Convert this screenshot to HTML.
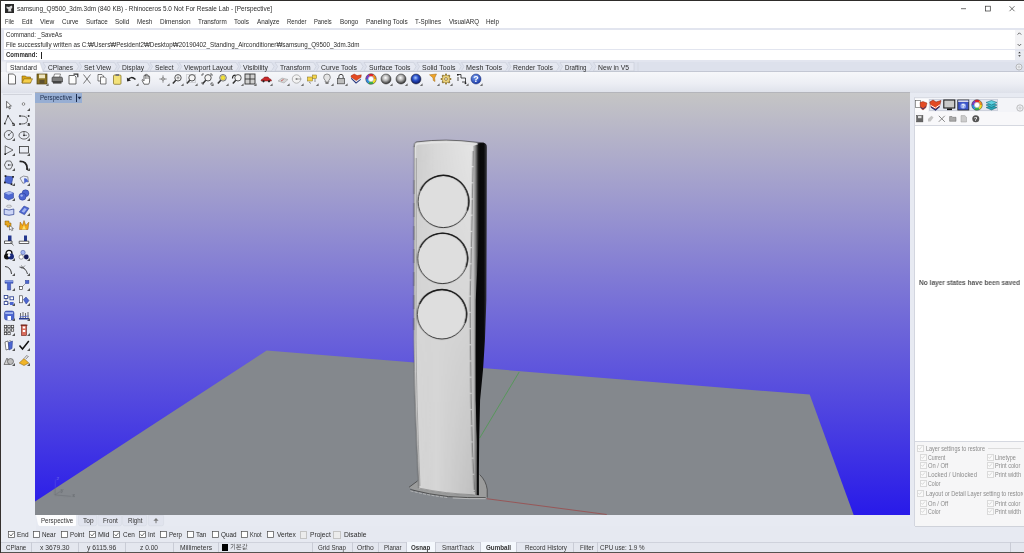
<!DOCTYPE html>
<html lang="en"><head><meta charset="utf-8"><title>Rhinoceros</title>
<style>

html,body{margin:0;padding:0}
body{width:1024px;height:553px;overflow:hidden;position:relative;background:#e6e9f1;font-family:"Liberation Sans", "NanumGothic", "Noto Sans CJK KR", sans-serif;font-size:7px;color:#222;line-height:1}
.a{position:absolute;white-space:nowrap}
.t{position:absolute;white-space:nowrap;line-height:10px;height:10px;transform-origin:0 50%}
.b{font-weight:bold}
.cb{position:absolute;width:5.5px;height:5.5px;border:0.6px solid #444;background:#fff}
.cbd{position:absolute;width:5.5px;height:5.5px;border:0.6px solid #c4c4c4;background:#ececec}
.cbg{position:absolute;width:5px;height:5px;border:0.6px solid #dadada;background:#fafafa}
.sep{position:absolute;width:1px;background:#c9ccd6;top:542px;height:10px}
svg{position:absolute;overflow:visible}

</style></head><body><div id="root" style="position:absolute;left:0;top:0;width:1024px;height:553px;will-change:transform">

<div class="a" style="left:0;top:0;width:1024px;height:27.5px;background:#fff"></div>
<div class="a" style="left:0;top:0;width:1024px;height:1px;background:#2e2c2a"></div>
<svg style="left:5px;top:4px" width="9" height="9" viewBox="0 0 9 9"><rect width="9" height="9" fill="#2a2a2a"/><path d="M1.5 2.5 L4 3 L6.5 1.5 L7.5 3 L6 5.5 L6.5 7.5 L3 7.5 L3.5 5.5 L1.5 4 Z" fill="#d8d8d8"/></svg>
<div class="t" id="t1" style="left:17px;top:4px;font-size:6.9px;color:#2c2c2c;transform:scaleX(0.9299);">samsung_Q9500_3dm.3dm (840 KB) - Rhinoceros 5.0 Not For Resale Lab - [Perspective]</div>
<svg style="left:955px;top:3px" width="66" height="12" viewBox="0 0 66 12"><g stroke="#333" stroke-width="0.7" fill="none"><path d="M6 5.7 H11"/><rect x="30.5" y="3.2" width="4.8" height="4.8"/><path d="M54.5 3.2 L59.5 8.2 M59.5 3.2 L54.5 8.2"/></g></svg>
<div class="t" id="t2" style="left:5px;top:17.2px;font-size:7.3px;color:#2c2c2c;transform:scaleX(0.7649);">File</div>
<div class="t" id="t3" style="left:22px;top:17.2px;font-size:7.3px;color:#2c2c2c;transform:scaleX(0.8348);">Edit</div>
<div class="t" id="t4" style="left:40px;top:17.2px;font-size:7.3px;color:#2c2c2c;transform:scaleX(0.9084);">View</div>
<div class="t" id="t5" style="left:61.5px;top:17.2px;font-size:7.3px;color:#2c2c2c;transform:scaleX(0.8475);">Curve</div>
<div class="t" id="t6" style="left:85.75px;top:17.2px;font-size:7.3px;color:#2c2c2c;transform:scaleX(0.8646);">Surface</div>
<div class="t" id="t7" style="left:114.5px;top:17.2px;font-size:7.3px;color:#2c2c2c;transform:scaleX(0.8778);">Solid</div>
<div class="t" id="t8" style="left:136.5px;top:17.2px;font-size:7.3px;color:#2c2c2c;transform:scaleX(0.8546);">Mesh</div>
<div class="t" id="t9" style="left:159.5px;top:17.2px;font-size:7.3px;color:#2c2c2c;transform:scaleX(0.8845);">Dimension</div>
<div class="t" id="t10" style="left:197.5px;top:17.2px;font-size:7.3px;color:#2c2c2c;transform:scaleX(0.8716);">Transform</div>
<div class="t" id="t11" style="left:234px;top:17.2px;font-size:7.3px;color:#2c2c2c;transform:scaleX(0.8799);">Tools</div>
<div class="t" id="t12" style="left:256.75px;top:17.2px;font-size:7.3px;color:#2c2c2c;transform:scaleX(0.8664);">Analyze</div>
<div class="t" id="t13" style="left:286.5px;top:17.2px;font-size:7.3px;color:#2c2c2c;transform:scaleX(0.8146);">Render</div>
<div class="t" id="t14" style="left:314px;top:17.2px;font-size:7.3px;color:#2c2c2c;transform:scaleX(0.7955);">Panels</div>
<div class="t" id="t15" style="left:339.75px;top:17.2px;font-size:7.3px;color:#2c2c2c;transform:scaleX(0.8645);">Bongo</div>
<div class="t" id="t16" style="left:365.5px;top:17.2px;font-size:7.3px;color:#2c2c2c;transform:scaleX(0.8818);">Paneling Tools</div>
<div class="t" id="t17" style="left:415px;top:17.2px;font-size:7.3px;color:#2c2c2c;transform:scaleX(0.8546);">T-Splines</div>
<div class="t" id="t18" style="left:448.5px;top:17.2px;font-size:7.3px;color:#2c2c2c;transform:scaleX(0.8436);">VisualARQ</div>
<div class="t" id="t19" style="left:486px;top:17.2px;font-size:7.3px;color:#2c2c2c;transform:scaleX(0.8658);">Help</div>
<div class="a" style="left:1px;top:27.5px;width:1023px;height:34px;background:#e2e5ef"></div>
<div class="a" style="left:4px;top:29.5px;width:1011px;height:19.8px;background:#fff"></div>
<div class="a" style="left:4px;top:50.2px;width:1011px;height:9.8px;background:#fff"></div>
<div class="a" style="left:1015px;top:29.5px;width:9px;height:19.5px;background:#f3f3f5"></div>
<div class="a" style="left:1015px;top:50.5px;width:9px;height:9.5px;background:#e9ebf1"></div>
<svg style="left:1015px;top:29px" width="9" height="31" viewBox="0 0 9 31"><g stroke="#444" stroke-width="0.8" fill="none"><path d="M2.6 5.6 L4.4 3.8 L6.2 5.6"/><path d="M2.6 15 L4.4 16.8 L6.2 15"/></g><path d="M3.2 24.3 L4.5 22.8 L5.8 24.3 Z M3.2 26.3 L4.5 27.8 L5.8 26.3 Z" fill="#333"/></svg>
<div class="t" id="t20" style="left:6px;top:29.5px;font-size:6.9px;color:#2c2c2c;transform:scaleX(0.8860);">Command: _SaveAs</div>
<div class="t" id="t21" style="left:6px;top:39.5px;font-size:6.9px;color:#2c2c2c;transform:scaleX(0.9076);">File successfully written as C:₩Users₩Pesident2₩Desktop₩20190402_Standing_Airconditioner₩samsung_Q9500_3dm.3dm</div>
<div class="t b" id="t22" style="left:6px;top:49.5px;font-size:6.9px;color:#2c2c2c;transform:scaleX(0.8754);">Command:</div>
<div class="a" style="left:40.5px;top:51.5px;width:0.7px;height:7px;background:#222"></div>
<div class="a" style="left:1px;top:61.5px;width:1023px;height:10px;background:#dde1ec"></div>
<div class="a" style="left:1px;top:71.5px;width:1023px;height:21.5px;background:linear-gradient(#f6f7fa,#eceef4 55%,#dee1ea)"></div>
<div class="a" style="left:35.3px;top:92.4px;width:874.4px;height:0.8px;background:#b4b5bb"></div>
<div class="a" style="left:1px;top:71px;width:1023px;height:0.7px;background:#c3c7d3"></div>
<svg style="left:0;top:61px" width="640" height="11" viewBox="0 0 640 11">
<rect x="1.3" y="0.5" width="5" height="10.5" fill="#eef0f5"/>
<path d="M43.0 1.4 H76.0 L78.6 5.6 L76.0 9.9 H43.0 L45.6 5.6 Z" fill="#e5e8f1" stroke="#c2c6d2" stroke-width="0.5"/>
<path d="M79.25 1.4 H114.25 L116.85 5.6 L114.25 9.9 H79.25 L81.85 5.6 Z" fill="#e5e8f1" stroke="#c2c6d2" stroke-width="0.5"/>
<path d="M117.25 1.4 H147.25 L149.85 5.6 L147.25 9.9 H117.25 L119.85 5.6 Z" fill="#e5e8f1" stroke="#c2c6d2" stroke-width="0.5"/>
<path d="M150.0 1.4 H176.5 L179.1 5.6 L176.5 9.9 H150.0 L152.6 5.6 Z" fill="#e5e8f1" stroke="#c2c6d2" stroke-width="0.5"/>
<path d="M179.25 1.4 H236.0 L238.6 5.6 L236.0 9.9 H179.25 L181.85 5.6 Z" fill="#e5e8f1" stroke="#c2c6d2" stroke-width="0.5"/>
<path d="M238.5 1.4 H271.5 L274.1 5.6 L271.5 9.9 H238.5 L241.1 5.6 Z" fill="#e5e8f1" stroke="#c2c6d2" stroke-width="0.5"/>
<path d="M275.0 1.4 H313.5 L316.1 5.6 L313.5 9.9 H275.0 L277.6 5.6 Z" fill="#e5e8f1" stroke="#c2c6d2" stroke-width="0.5"/>
<path d="M316.5 1.4 H360.5 L363.1 5.6 L360.5 9.9 H316.5 L319.1 5.6 Z" fill="#e5e8f1" stroke="#c2c6d2" stroke-width="0.5"/>
<path d="M364.0 1.4 H413.5 L416.1 5.6 L413.5 9.9 H364.0 L366.6 5.6 Z" fill="#e5e8f1" stroke="#c2c6d2" stroke-width="0.5"/>
<path d="M417.0 1.4 H458.5 L461.1 5.6 L458.5 9.9 H417.0 L419.6 5.6 Z" fill="#e5e8f1" stroke="#c2c6d2" stroke-width="0.5"/>
<path d="M461.5 1.4 H505.5 L508.1 5.6 L505.5 9.9 H461.5 L464.1 5.6 Z" fill="#e5e8f1" stroke="#c2c6d2" stroke-width="0.5"/>
<path d="M508.5 1.4 H556.5 L559.1 5.6 L556.5 9.9 H508.5 L511.1 5.6 Z" fill="#e5e8f1" stroke="#c2c6d2" stroke-width="0.5"/>
<path d="M560.0 1.4 H589.5 L592.1 5.6 L589.5 9.9 H560.0 L562.6 5.6 Z" fill="#e5e8f1" stroke="#c2c6d2" stroke-width="0.5"/>
<path d="M593.5 1.4 H634.0 V9.9 H593.5 L596.1 5.6 Z" fill="#e5e8f1" stroke="#c2c6d2" stroke-width="0.5"/>
<path d="M6.3 11 V1.2 H40 L43.2 11 Z" fill="#fcfcfd" stroke="#c9ccd6" stroke-width="0.5"/>
<path d="M638 1.4 V9.9" stroke="#cdd0da" stroke-width="0.5"/></svg>
<div class="t" id="t23" style="left:10px;top:63.0px;font-size:6.9px;color:#2c2c2c;transform:scaleX(0.9654);">Standard</div>
<div class="t" id="t24" style="left:47.5px;top:63.0px;font-size:6.9px;color:#2c2c2c;transform:scaleX(0.9598);">CPlanes</div>
<div class="t" id="t25" style="left:83.75px;top:63.0px;font-size:6.9px;color:#2c2c2c;transform:scaleX(0.9971);">Set View</div>
<div class="t" id="t26" style="left:121.75px;top:63.0px;font-size:6.9px;color:#2c2c2c;transform:scaleX(0.9737);">Display</div>
<div class="t" id="t27" style="left:154.5px;top:63.0px;font-size:6.9px;color:#2c2c2c;transform:scaleX(0.9657);">Select</div>
<div class="t" id="t28" style="left:183.75px;top:63.0px;font-size:6.9px;color:#2c2c2c;transform:scaleX(0.9889);">Viewport Layout</div>
<div class="t" id="t29" style="left:243px;top:63.0px;font-size:6.9px;color:#2c2c2c;transform:scaleX(1.0095);">Visibility</div>
<div class="t" id="t30" style="left:279.5px;top:63.0px;font-size:6.9px;color:#2c2c2c;transform:scaleX(0.9794);">Transform</div>
<div class="t" id="t31" style="left:321px;top:63.0px;font-size:6.9px;color:#2c2c2c;transform:scaleX(0.9927);">Curve Tools</div>
<div class="t" id="t32" style="left:368.5px;top:63.0px;font-size:6.9px;color:#2c2c2c;transform:scaleX(0.9970);">Surface Tools</div>
<div class="t" id="t33" style="left:421.5px;top:63.0px;font-size:6.9px;color:#2c2c2c;transform:scaleX(1.0089);">Solid Tools</div>
<div class="t" id="t34" style="left:466px;top:63.0px;font-size:6.9px;color:#2c2c2c;transform:scaleX(1.0364);">Mesh Tools</div>
<div class="t" id="t35" style="left:513px;top:63.0px;font-size:6.9px;color:#2c2c2c;transform:scaleX(0.9880);">Render Tools</div>
<div class="t" id="t36" style="left:564.5px;top:63.0px;font-size:6.9px;color:#2c2c2c;transform:scaleX(0.8906);">Drafting</div>
<div class="t" id="t37" style="left:598px;top:63.0px;font-size:6.9px;color:#2c2c2c;transform:scaleX(0.9871);">New in V5</div>
<svg style="left:1015px;top:63px" width="8" height="8" viewBox="0 0 8 8"><circle cx="4" cy="4" r="3" fill="#eceef3" stroke="#999" stroke-width="0.6"/><circle cx="4" cy="4" r="1" fill="none" stroke="#aaa" stroke-width="0.5"/></svg>
<svg style="left:6.2px;top:73.3px" width="12" height="12" viewBox="0 0 12 12"><path d="M2.5 1 H7.5 L9.5 3 V11 H2.5 Z" fill="#fcfcfc" stroke="#444" stroke-width="0.8"/></svg>
<svg style="left:21.3px;top:73.3px" width="12" height="12" viewBox="0 0 12 12"><path d="M1 3 H4.5 L5.5 4 H9.5 V10 H1 Z" fill="#d9a514" stroke="#7a5a0a" stroke-width="0.6"/><path d="M1 10 L3 5.8 H11.5 L9.5 10 Z" fill="#f6cf4a" stroke="#7a5a0a" stroke-width="0.6"/></svg>
<svg style="left:36.3px;top:73.3px" width="12" height="12" viewBox="0 0 12 12"><rect x="1" y="1" width="10" height="10" fill="#8b7322" stroke="#4d3f10" stroke-width="0.7"/><rect x="3" y="1.5" width="6" height="3.8" fill="#efe6c0"/><rect x="3.5" y="7" width="5" height="3.6" fill="#5d5030"/><path d="M12.6 10.2 V13 H9.8 Z" fill="#6e6e6e"/></svg>
<svg style="left:50.8px;top:73.3px" width="12" height="12" viewBox="0 0 12 12"><path d="M3.5 1 H9.5 L8.5 4.5 H2.5 Z" fill="#fff" stroke="#444" stroke-width="0.6"/><path d="M1 5 Q1 4 2 4 H10 Q11.5 4 11.5 5.5 V9 H1 Z" fill="#7d7d7d" stroke="#333" stroke-width="0.6"/><rect x="2" y="8" width="8.5" height="2.6" fill="#444"/></svg>
<svg style="left:67.1px;top:73.3px" width="12" height="12" viewBox="0 0 12 12"><path d="M2 2.5 H7.5 L9 4 V11 H2 Z" fill="#fcfcfc" stroke="#444" stroke-width="0.8"/><path d="M6.5 1.2 H10.8 V4.2" fill="none" stroke="#333" stroke-width="1.2"/></svg>
<svg style="left:80.8px;top:73.3px" width="12" height="12" viewBox="0 0 12 12"><path d="M2.5 1.5 L9.5 10.5 M9.5 1.5 L2.5 10.5" stroke="#666" stroke-width="0.9" fill="none"/></svg>
<svg style="left:96.3px;top:73.3px" width="12" height="12" viewBox="0 0 12 12"><path d="M2 1.5 H6 L7.5 3 V8 H2 Z" fill="#fcfcfc" stroke="#444" stroke-width="0.7"/><path d="M4.5 4 H8.5 L10 5.5 V11 H4.5 Z" fill="#fcfcfc" stroke="#444" stroke-width="0.7"/></svg>
<svg style="left:110.8px;top:73.3px" width="12" height="12" viewBox="0 0 12 12"><rect x="2.5" y="2" width="7.5" height="9.3" rx="1" fill="#f3e27a" stroke="#7d6a1a" stroke-width="0.7"/><rect x="4.5" y="1" width="3.5" height="2" fill="#777"/></svg>
<svg style="left:125.8px;top:73.3px" width="12" height="12" viewBox="0 0 12 12"><path d="M2 7 Q5 2.5 9.5 6.5" fill="none" stroke="#222" stroke-width="1.5"/><path d="M0.8 4.5 L1.2 8.6 L5 7.4 Z" fill="#222"/><path d="M12.6 10.2 V13 H9.8 Z" fill="#6e6e6e"/></svg>
<svg style="left:140.4px;top:73.3px" width="12" height="12" viewBox="0 0 12 12"><path d="M4 11.2 L2.2 7.6 Q1.8 6.6 2.8 6.6 L4 7.8 V3 Q4 2.2 4.7 2.2 Q5.4 2.2 5.4 3 V2 Q5.4 1.2 6.1 1.2 Q6.8 1.2 6.8 2 V2.6 Q6.8 1.9 7.5 1.9 Q8.2 1.9 8.2 2.7 V3.6 Q8.2 3 8.9 3 Q9.6 3 9.6 3.8 V8 Q9.6 9.8 8.6 11.2 Z" fill="#fff" stroke="#2e2e2e" stroke-width="0.7"/><path d="M5.4 3 V6 M6.8 2.6 V6 M8.2 3.6 V6" stroke="#2e2e2e" stroke-width="0.5" fill="none"/></svg>
<svg style="left:156.8px;top:73.3px" width="12" height="12" viewBox="0 0 12 12"><path d="M6 2.3 V9.7 M2.3 6 H9.7" stroke="#777" stroke-width="0.8"/><circle cx="6" cy="6" r="1.2" fill="#fff" stroke="#333" stroke-width="0.6"/><path d="M12.6 10.2 V13 H9.8 Z" fill="#6e6e6e"/></svg>
<svg style="left:170.8px;top:73.3px" width="12" height="12" viewBox="0 0 12 12"><circle cx="7" cy="4.8" r="3.2" fill="#f4f4f4" stroke="#444" stroke-width="0.9"/><path d="M4.8 7.2 L1.8 10.6" stroke="#333" stroke-width="1.5"/><path d="M5.5 4.8 H8.5 M7 3.3 V6.3" stroke="#555" stroke-width="0.6"/><path d="M12.6 10.2 V13 H9.8 Z" fill="#6e6e6e"/></svg>
<svg style="left:185.4px;top:73.3px" width="12" height="12" viewBox="0 0 12 12"><circle cx="7" cy="4.8" r="3.2" fill="#f4f4f4" stroke="#444" stroke-width="0.9"/><path d="M4.8 7.2 L1.8 10.6" stroke="#333" stroke-width="1.5"/><rect x="1.5" y="1.5" width="9" height="8" fill="none" stroke="#777" stroke-width="0.5" stroke-dasharray="1 1"/><path d="M12.6 10.2 V13 H9.8 Z" fill="#6e6e6e"/></svg>
<svg style="left:200.70000000000002px;top:73.3px" width="12" height="12" viewBox="0 0 12 12"><circle cx="7" cy="4.8" r="3.2" fill="#f4f4f4" stroke="#444" stroke-width="0.9"/><path d="M4.8 7.2 L1.8 10.6" stroke="#333" stroke-width="1.5"/><path d="M1 3 V1 H3 M9 1 H11 V3 M11 9 V11 H9 M3 11 H1 V9" fill="none" stroke="#333" stroke-width="0.7"/><path d="M12.6 10.2 V13 H9.8 Z" fill="#6e6e6e"/></svg>
<svg style="left:215.8px;top:73.3px" width="12" height="12" viewBox="0 0 12 12"><circle cx="7" cy="4.8" r="3.3" fill="#e8e8e8" stroke="#666" stroke-width="0.9"/><circle cx="7" cy="4.8" r="2.2" fill="#f2e23a" stroke="#a89a18" stroke-width="0.4"/><path d="M4.8 7.2 L1.8 10.6" stroke="#333" stroke-width="1.5"/><path d="M12.6 10.2 V13 H9.8 Z" fill="#6e6e6e"/></svg>
<svg style="left:230.5px;top:73.3px" width="12" height="12" viewBox="0 0 12 12"><circle cx="7" cy="4.8" r="3.2" fill="#f4f4f4" stroke="#444" stroke-width="0.9"/><path d="M4.8 7.2 L1.8 10.6" stroke="#333" stroke-width="1.5"/><path d="M1.5 5.5 Q1.5 2 4.5 2.2" fill="none" stroke="#222" stroke-width="1.2"/><path d="M12.6 10.2 V13 H9.8 Z" fill="#6e6e6e"/></svg>
<svg style="left:244.4px;top:73.3px" width="12" height="12" viewBox="0 0 12 12"><rect x="1" y="1" width="10" height="10" fill="#cfcfcf" stroke="#333" stroke-width="0.9"/><path d="M6 1 V11 M1 6 H11" stroke="#333" stroke-width="0.9"/><path d="M12.6 10.2 V13 H9.8 Z" fill="#6e6e6e"/></svg>
<svg style="left:260.2px;top:73.3px" width="12" height="12" viewBox="0 0 12 12"><path d="M1 8 Q1 6 3 5.8 L4.5 4 H8 L9.5 5.8 Q11.5 6 11.5 8 Z" fill="#c8282a" stroke="#6a1010" stroke-width="0.5"/><circle cx="3.5" cy="8.3" r="1.1" fill="#222"/><circle cx="9" cy="8.3" r="1.1" fill="#222"/><path d="M12.6 10.2 V13 H9.8 Z" fill="#6e6e6e"/></svg>
<svg style="left:276.7px;top:73.3px" width="12" height="12" viewBox="0 0 12 12"><path d="M1 8 L5 5 L11 6.5 L7 10 Z" fill="#d5d5d5" stroke="#999" stroke-width="0.5"/><path d="M4 8 L6.5 6.5" stroke="#b33" stroke-width="0.7"/><path d="M12.6 10.2 V13 H9.8 Z" fill="#6e6e6e"/></svg>
<svg style="left:290.7px;top:73.3px" width="12" height="12" viewBox="0 0 12 12"><circle cx="5.5" cy="6" r="4.2" fill="#f2f2f2" stroke="#999" stroke-width="0.7"/><circle cx="5.5" cy="6" r="1" fill="#888"/><path d="M5.5 6 H10.5" stroke="#888" stroke-width="0.7"/><path d="M12.6 10.2 V13 H9.8 Z" fill="#6e6e6e"/></svg>
<svg style="left:305.90000000000003px;top:73.3px" width="12" height="12" viewBox="0 0 12 12"><rect x="1.5" y="4" width="5" height="4" fill="#f5d54a" stroke="#7d6a1a" stroke-width="0.5"/><rect x="6.5" y="2" width="4" height="3.5" fill="#f5d54a" stroke="#7d6a1a" stroke-width="0.5"/><path d="M3 9 L5 10.5 M9 6 V9" stroke="#555" stroke-width="0.6"/><path d="M12.6 10.2 V13 H9.8 Z" fill="#6e6e6e"/></svg>
<svg style="left:320.5px;top:73.3px" width="12" height="12" viewBox="0 0 12 12"><path d="M6 1 Q9.3 1 9.3 4.2 Q9.3 6 7.8 7.3 V9 H4.2 V7.3 Q2.7 6 2.7 4.2 Q2.7 1 6 1 Z" fill="#e4e4e4" stroke="#666" stroke-width="0.7"/><rect x="4.5" y="9" width="3" height="2" fill="#777"/><path d="M12.6 10.2 V13 H9.8 Z" fill="#6e6e6e"/></svg>
<svg style="left:335.3px;top:73.3px" width="12" height="12" viewBox="0 0 12 12"><path d="M3.8 5.5 V3.6 Q3.8 1.3 6 1.3 Q8.2 1.3 8.2 3.6 V5.5" fill="none" stroke="#444" stroke-width="1"/><rect x="2.5" y="5.5" width="7" height="5.3" fill="#bdbdbd" stroke="#444" stroke-width="0.7"/><path d="M12.6 10.2 V13 H9.8 Z" fill="#6e6e6e"/></svg>
<svg style="left:350.3px;top:73.3px" width="12" height="12" viewBox="0 0 12 12"><path d="M1.2 6 L6 10.8 L10.6 7 L11.2 4 L6.5 7.5 L1 3.2 Z" fill="#2a3a80"/><path d="M1 4.6 L6.2 9.3 L11 5.6 L11.2 3.4 L6.5 6 L1 2.6 Z" fill="#f4f4f4"/><path d="M1 2.8 L4.2 1 L7.2 2.6 L11.3 1.8 L11 4.2 L6.3 7.6 L1.2 4.2 Z" fill="#e44a22" stroke="#8c220e" stroke-width="0.4"/></svg>
<svg style="left:364.90000000000003px;top:73.3px" width="12" height="12" viewBox="0 0 12 12"><path d="M4.00 2.54 A4 4 0 0 1 8.12 2.61" fill="none" stroke="#e8242c" stroke-width="2.6"/><path d="M8.00 2.54 A4 4 0 0 1 10.00 6.14" fill="none" stroke="#f08a1c" stroke-width="2.6"/><path d="M10.00 6.00 A4 4 0 0 1 7.88 9.53" fill="none" stroke="#f2de22" stroke-width="2.6"/><path d="M8.00 9.46 A4 4 0 0 1 3.88 9.39" fill="none" stroke="#3cb64a" stroke-width="2.6"/><path d="M4.00 9.46 A4 4 0 0 1 2.00 5.86" fill="none" stroke="#2a8fe0" stroke-width="2.6"/><path d="M2.00 6.00 A4 4 0 0 1 4.12 2.47" fill="none" stroke="#7a3cc8" stroke-width="2.6"/><circle cx="6" cy="6" r="5.3" fill="none" stroke="#333" stroke-width="0.5"/><circle cx="6" cy="6" r="2.7" fill="#fff" stroke="#555" stroke-width="0.3"/></svg>
<svg style="left:380.1px;top:73.3px" width="12" height="12" viewBox="0 0 12 12"><defs><radialGradient id="g99" cx="0.45" cy="0.38" r="0.62"><stop offset="0" stop-color="#ffffff"/><stop offset="0.45" stop-color="#b8b8b8"/><stop offset="1" stop-color="#2a2a2a"/></radialGradient></defs><circle cx="6" cy="6" r="5" fill="url(#g99)" stroke="#2a2a2a" stroke-width="0.5"/><path d="M12.6 10.2 V13 H9.8 Z" fill="#6e6e6e"/></svg>
<svg style="left:394.90000000000003px;top:73.3px" width="12" height="12" viewBox="0 0 12 12"><defs><radialGradient id="g100" cx="0.45" cy="0.38" r="0.62"><stop offset="0" stop-color="#ffffff"/><stop offset="0.45" stop-color="#b0b0b0"/><stop offset="1" stop-color="#262626"/></radialGradient></defs><circle cx="6" cy="6" r="5" fill="url(#g100)" stroke="#2a2a2a" stroke-width="0.5"/><path d="M12.6 10.2 V13 H9.8 Z" fill="#6e6e6e"/></svg>
<svg style="left:410.0px;top:73.3px" width="12" height="12" viewBox="0 0 12 12"><defs><radialGradient id="g101" cx="0.45" cy="0.38" r="0.62"><stop offset="0" stop-color="#a8c8ff"/><stop offset="0.45" stop-color="#2a50c8"/><stop offset="1" stop-color="#0a1660"/></radialGradient></defs><circle cx="6" cy="6" r="5" fill="url(#g101)" stroke="#2a2a2a" stroke-width="0.5"/><path d="M12.6 10.2 V13 H9.8 Z" fill="#6e6e6e"/></svg>
<svg style="left:427.40000000000003px;top:73.3px" width="12" height="12" viewBox="0 0 12 12"><path d="M2.5 1.8 L9.5 1 L7.6 5 L8 8.5 L6.3 7.5 L6 4.8 Z" fill="#f0a428" stroke="#a06a14" stroke-width="0.5"/><path d="M12.6 10.2 V13 H9.8 Z" fill="#6e6e6e"/></svg>
<svg style="left:439.6px;top:73.3px" width="12" height="12" viewBox="0 0 12 12"><circle cx="6" cy="6" r="3.6" fill="#e8cc6a" stroke="#6a5212" stroke-width="0.7"/><g stroke="#6a5212" stroke-width="2"><path d="M6 0.8 V2.4 M6 9.6 V11.2 M0.8 6 H2.4 M9.6 6 H11.2 M2.3 2.3 L3.5 3.5 M8.5 8.5 L9.7 9.7 M2.3 9.7 L3.5 8.5 M8.5 3.5 L9.7 2.3"/></g><circle cx="6" cy="6" r="3.3" fill="#ecd27a"/><g stroke="#ecd27a" stroke-width="1.1"><path d="M6 1.3 V2.8 M6 9.2 V10.7 M1.3 6 H2.8 M9.2 6 H10.7 M2.7 2.7 L3.7 3.7 M8.3 8.3 L9.3 9.3 M2.7 9.3 L3.7 8.3 M8.3 3.7 L9.3 2.7"/></g><circle cx="6" cy="6" r="1.4" fill="#f6f2e2" stroke="#6a5212" stroke-width="0.6"/><path d="M12.6 10.2 V13 H9.8 Z" fill="#6e6e6e"/></svg>
<svg style="left:455.8px;top:73.3px" width="12" height="12" viewBox="0 0 12 12"><path d="M1.5 1.5 H5 V5 M5 5 H9.5 V10.5 M2 4 V8 M6 9 H10" fill="none" stroke="#222" stroke-width="0.8"/><rect x="1" y="1" width="1.6" height="1.6" fill="#222"/><rect x="8.7" y="9.5" width="1.6" height="1.6" fill="#222"/><path d="M12.6 10.2 V13 H9.8 Z" fill="#6e6e6e"/></svg>
<svg style="left:469.8px;top:73.3px" width="12" height="12" viewBox="0 0 12 12"><defs><radialGradient id="hg" cx="0.4" cy="0.3" r="0.7"><stop offset="0" stop-color="#7aa0f0"/><stop offset="1" stop-color="#1a3aa8"/></radialGradient></defs><circle cx="6" cy="6" r="5" fill="url(#hg)" stroke="#14286e" stroke-width="0.5"/><text x="6" y="9.2" font-size="9" font-weight="bold" fill="#fff" text-anchor="middle" font-family="Liberation Sans, sans-serif">?</text><path d="M12.6 10.2 V13 H9.8 Z" fill="#6e6e6e"/></svg>
<div class="a" style="left:0;top:93px;width:36px;height:449px;background:#e9ecf3"></div>
<div class="a" style="left:3px;top:94.3px;width:29px;height:0.8px;background:#d0d3db"></div>
<svg style="left:3px;top:98.5px" width="12" height="12" viewBox="0 0 12 12"><path d="M3.6 2.3 V9 L5.2 7.5 L6.4 10 L7.4 9.5 L6.3 7.1 H8.4 Z" fill="#fff" stroke="#333" stroke-width="0.7"/></svg>
<svg style="left:18px;top:98.5px" width="12" height="12" viewBox="0 0 12 12"><circle cx="5.5" cy="5" r="1.3" fill="#fff" stroke="#444" stroke-width="0.6"/><path d="M12 9 V12 H9 Z" fill="#555"/></svg>
<svg style="left:3px;top:113.5px" width="12" height="12" viewBox="0 0 12 12"><path d="M1.8 9.5 L5 2 L10 9.5" fill="none" stroke="#333" stroke-width="0.7"/><rect x="1" y="8.8" width="1.6" height="1.6" fill="#222"/><rect x="4.2" y="1.2" width="1.6" height="1.6" fill="#222"/><rect x="9.2" y="8.8" width="1.6" height="1.6" fill="#222"/><path d="M12 9 V12 H9 Z" fill="#555"/></svg>
<svg style="left:18px;top:113.5px" width="12" height="12" viewBox="0 0 12 12"><path d="M3 2 Q9.5 2 9.5 6 Q9.5 10 3 10" fill="none" stroke="#333" stroke-width="0.7"/><path d="M2 2 H10.5 M2 10 H10.5" stroke="#888" stroke-width="0.4" stroke-dasharray="1 1"/><rect x="1.2" y="1.2" width="1.6" height="1.6" fill="#222"/><rect x="9.8" y="1.2" width="1.6" height="1.6" fill="#222"/><rect x="1.2" y="9.2" width="1.6" height="1.6" fill="#222"/><rect x="9.8" y="9.2" width="1.6" height="1.6" fill="#222"/><path d="M12 9 V12 H9 Z" fill="#555"/></svg>
<svg style="left:3px;top:128.5px" width="12" height="12" viewBox="0 0 12 12"><circle cx="5.8" cy="6" r="4.5" fill="none" stroke="#333" stroke-width="0.7"/><path d="M5.8 6 L8.8 3" stroke="#333" stroke-width="0.7"/><circle cx="5.8" cy="6" r="0.8" fill="#222"/><path d="M12 9 V12 H9 Z" fill="#555"/></svg>
<svg style="left:18px;top:128.5px" width="12" height="12" viewBox="0 0 12 12"><ellipse cx="6" cy="6.3" rx="5" ry="3.8" fill="none" stroke="#333" stroke-width="0.7"/><path d="M6 6.3 H9 M6 2.2 V6.3" stroke="#333" stroke-width="0.6"/><circle cx="6" cy="6.3" r="0.9" fill="#222"/><path d="M12 9 V12 H9 Z" fill="#555"/></svg>
<svg style="left:3px;top:143.5px" width="12" height="12" viewBox="0 0 12 12"><path d="M2.2 1.8 L10 6 L2.2 10.2 Z" fill="none" stroke="#333" stroke-width="0.7"/><rect x="1.4" y="9.4" width="1.6" height="1.6" fill="#222"/><path d="M12 9 V12 H9 Z" fill="#555"/></svg>
<svg style="left:18px;top:143.5px" width="12" height="12" viewBox="0 0 12 12"><rect x="1.5" y="2.5" width="9" height="6.5" fill="none" stroke="#333" stroke-width="0.8"/><path d="M12 9 V12 H9 Z" fill="#555"/></svg>
<svg style="left:3px;top:158.5px" width="12" height="12" viewBox="0 0 12 12"><path d="M3.5 2 H7.5 L9.8 6 L7.5 10 H3.5 L1.4 6 Z" fill="none" stroke="#333" stroke-width="0.7"/><path d="M5.6 6 H9.5" stroke="#333" stroke-width="0.6"/><circle cx="5.6" cy="6" r="0.8" fill="#222"/><path d="M12 9 V12 H9 Z" fill="#555"/></svg>
<svg style="left:18px;top:158.5px" width="12" height="12" viewBox="0 0 12 12"><path d="M1.5 2.5 Q9 2 9.2 9.5" fill="none" stroke="#222" stroke-width="1.7"/><rect x="8.2" y="9" width="2" height="2" fill="#222"/><path d="M12 9 V12 H9 Z" fill="#555"/></svg>
<svg style="left:3px;top:173.5px" width="12" height="12" viewBox="0 0 12 12"><path d="M2.5 2 L10 2.8 L8.5 10.2 L1.8 8.5 Z" fill="#4c66d0" stroke="#24388e" stroke-width="0.6"/><rect x="1.6" y="1.2" width="1.7" height="1.7" fill="#222"/><rect x="9.2" y="2" width="1.7" height="1.7" fill="#222"/><rect x="7.7" y="9.4" width="1.7" height="1.7" fill="#222"/><rect x="1" y="7.7" width="1.7" height="1.7" fill="#222"/><path d="M12 9 V12 H9 Z" fill="#555"/></svg>
<svg style="left:18px;top:173.5px" width="12" height="12" viewBox="0 0 12 12"><path d="M2 4 Q5 0.8 9.8 2.8 L10.4 8 Q7 6 5 9.5 Z" fill="#e8ecfa" stroke="#555" stroke-width="0.6"/><path d="M6 4.5 Q9 3.5 10.4 8 Q8 7 6.5 10 Z" fill="#4c66d0"/><path d="M12 9 V12 H9 Z" fill="#555"/></svg>
<svg style="left:3px;top:188.5px" width="12" height="12" viewBox="0 0 12 12"><path d="M1.5 4 L6.5 2.5 L10.5 4 V9 L5.5 11 L1.5 9 Z" fill="#4c66d0" stroke="#24388e" stroke-width="0.5"/><path d="M1.5 4 L5.5 5.8 L10.5 4 L6.5 2.5 Z" fill="#a4b6f0"/><path d="M12 9 V12 H9 Z" fill="#555"/></svg>
<svg style="left:18px;top:188.5px" width="12" height="12" viewBox="0 0 12 12"><circle cx="7.5" cy="4.2" r="3.4" fill="#4c66d0" stroke="#24388e" stroke-width="0.5"/><circle cx="4.5" cy="7.6" r="3.6" fill="#4c66d0" stroke="#24388e" stroke-width="0.5"/><circle cx="3.6" cy="6.6" r="1.2" fill="#a4b6f0"/><path d="M12 9 V12 H9 Z" fill="#555"/></svg>
<svg style="left:3px;top:203.5px" width="12" height="12" viewBox="0 0 12 12"><ellipse cx="6" cy="2.2" rx="2.6" ry="1.1" fill="none" stroke="#777" stroke-width="0.5"/><path d="M1.2 5 Q6 7 10.8 5 V10.5 Q6 12 1.2 10.5 Z" fill="#cdd6f6" stroke="#24388e" stroke-width="0.7"/></svg>
<svg style="left:18px;top:203.5px" width="12" height="12" viewBox="0 0 12 12"><path d="M1.2 8 L6 2 L11 4.2 L6.5 10.8 Z" fill="#4c66d0" stroke="#24388e" stroke-width="0.5"/><path d="M3.5 7.5 L6.5 4 L8.8 5 L6 8.8 Z" fill="#a4b6f0"/><path d="M12 9 V12 H9 Z" fill="#555"/></svg>
<svg style="left:3px;top:218.5px" width="12" height="12" viewBox="0 0 12 12"><path d="M2 2 H6 V4 H8 V8 H4 V6 H2 Z" fill="#e8a820" stroke="#7a5408" stroke-width="0.5"/><path d="M6.5 6.5 V11 L7.8 10 L8.8 11.8 L9.8 11.2 L8.8 9.6 H10.5 Z" fill="#fff" stroke="#333" stroke-width="0.5"/></svg>
<svg style="left:18px;top:218.5px" width="12" height="12" viewBox="0 0 12 12"><path d="M1.5 10.5 L2.2 3 L4.5 6.5 L6 1.5 L7.8 6.5 L10.8 3.2 L10 10.5 Z" fill="#f2a818" stroke="#9a5a08" stroke-width="0.5"/><path d="M4 10.5 L6 6 L8 10.5 Z" fill="#fbe070"/></svg>
<svg style="left:3px;top:233.5px" width="12" height="12" viewBox="0 0 12 12"><path d="M5 1.5 H8.5 V7 H5 Z" fill="#24388e"/><path d="M1.5 7 H9 V9.5 H1.5 Z" fill="#fff" stroke="#222" stroke-width="0.7"/><path d="M7.5 8 L10.5 11.5" stroke="#555" stroke-width="0.8"/></svg>
<svg style="left:18px;top:233.5px" width="12" height="12" viewBox="0 0 12 12"><path d="M6 1.5 H9 V7 H6 Z" fill="#24388e"/><path d="M1.2 7.2 H10.8 V9.5 H1.2 Z" fill="#fff" stroke="#222" stroke-width="0.7"/></svg>
<svg style="left:3px;top:248.5px" width="12" height="12" viewBox="0 0 12 12"><circle cx="6" cy="4.4" r="3" fill="#fff" stroke="#111" stroke-width="1.3"/><circle cx="4" cy="7.6" r="3" fill="#111"/><circle cx="8" cy="7.6" r="3" fill="#1a2a7a"/><circle cx="6" cy="6.4" r="1.3" fill="#fff"/><path d="M12 9 V12 H9 Z" fill="#555"/></svg>
<svg style="left:18px;top:248.5px" width="12" height="12" viewBox="0 0 12 12"><circle cx="5" cy="3.5" r="2.2" fill="#a4b6f0" stroke="#24388e" stroke-width="0.4"/><circle cx="3.2" cy="8" r="2.2" fill="#fff" stroke="#444" stroke-width="0.5"/><circle cx="8.3" cy="8" r="2.4" fill="#141a5a"/><path d="M12 9 V12 H9 Z" fill="#555"/></svg>
<svg style="left:3px;top:263.5px" width="12" height="12" viewBox="0 0 12 12"><path d="M2 2.5 Q8 3 8.5 10" fill="none" stroke="#222" stroke-width="0.9"/><path d="M12 9 V12 H9 Z" fill="#555"/></svg>
<svg style="left:18px;top:263.5px" width="12" height="12" viewBox="0 0 12 12"><path d="M1.5 3 Q8 3.5 9.5 10" fill="none" stroke="#222" stroke-width="0.8"/><path d="M3 1.5 L7 5 M7 1.5 L3.5 5" stroke="#444" stroke-width="0.6"/><path d="M12 9 V12 H9 Z" fill="#555"/></svg>
<svg style="left:3px;top:278.5px" width="12" height="12" viewBox="0 0 12 12"><path d="M2 1.5 H10 V4.2 H7.6 V11 H4.4 V4.2 H2 Z" fill="#4c66d0" stroke="#24388e" stroke-width="0.5"/><path d="M2 1.5 H10 V2.6 H2 Z" fill="#a4b6f0"/><path d="M12 9 V12 H9 Z" fill="#555"/></svg>
<svg style="left:18px;top:278.5px" width="12" height="12" viewBox="0 0 12 12"><path d="M3.5 8.5 L8.5 3.5" stroke="#333" stroke-width="0.6" stroke-dasharray="1.2 0.8"/><rect x="1.5" y="7.5" width="3" height="3" fill="#fff" stroke="#222" stroke-width="0.6"/><rect x="7.5" y="1.5" width="3.4" height="3" fill="#4c66d0" stroke="#24388e" stroke-width="0.5"/><path d="M12 9 V12 H9 Z" fill="#555"/></svg>
<svg style="left:3px;top:293.5px" width="12" height="12" viewBox="0 0 12 12"><rect x="1.2" y="1.5" width="3.6" height="3" fill="#fff" stroke="#24388e" stroke-width="0.8"/><rect x="7" y="2.8" width="3.6" height="3" fill="#fff" stroke="#24388e" stroke-width="0.8"/><rect x="1.2" y="7.6" width="3.6" height="3" fill="#fff" stroke="#24388e" stroke-width="0.8"/><rect x="7" y="8" width="3.6" height="3" fill="#4c66d0"/><path d="M4.8 3 H7 M3 4.5 V7.6 M4.8 9.2 H7" stroke="#333" stroke-width="0.5"/><path d="M12 9 V12 H9 Z" fill="#555"/></svg>
<svg style="left:18px;top:293.5px" width="12" height="12" viewBox="0 0 12 12"><rect x="1.5" y="1.8" width="3" height="7" fill="#fff" stroke="#333" stroke-width="0.6"/><path d="M5.5 5.5 L8 3 L11 6.5 L8.2 10 Z" fill="#4c66d0" stroke="#24388e" stroke-width="0.5"/><path d="M12 9 V12 H9 Z" fill="#555"/></svg>
<svg style="left:3px;top:308.5px" width="12" height="12" viewBox="0 0 12 12"><path d="M1.5 4 Q1.5 2 3.5 2 H9 Q11 2 11 4 V9 Q11 11 9 11 H3.5 Q1.5 11 1.5 9 Z" fill="#4c66d0" stroke="#24388e" stroke-width="0.5"/><path d="M2.2 3.2 H10 V5 H2.2 Z" fill="#a4b6f0"/><path d="M4.5 7 H8 V11 H4.5 Z" fill="#fff"/><path d="M12 9 V12 H9 Z" fill="#555"/></svg>
<svg style="left:18px;top:308.5px" width="12" height="12" viewBox="0 0 12 12"><path d="M1 9 H11 V10.5 H1 Z" fill="#24388e"/><path d="M2.5 4 V9 M5 3 V9 M7.5 4 V9 M10 3 V9" stroke="#333" stroke-width="0.7"/><path d="M1.5 8 L10.8 7" stroke="#4c66d0" stroke-width="0.8"/><path d="M12 9 V12 H9 Z" fill="#555"/></svg>
<svg style="left:3px;top:323.5px" width="12" height="12" viewBox="0 0 12 12"><g fill="#fff" stroke="#333" stroke-width="0.7"><rect x="1.3" y="1.3" width="2.4" height="2.4"/><rect x="4.8" y="1.3" width="2.4" height="2.4"/><rect x="8.3" y="1.3" width="2.4" height="2.4"/><rect x="1.3" y="4.8" width="2.4" height="2.4"/><rect x="4.8" y="4.8" width="2.4" height="2.4"/><rect x="8.3" y="4.8" width="2.4" height="2.4"/><rect x="1.3" y="8.3" width="2.4" height="2.4"/><rect x="4.8" y="8.3" width="2.4" height="2.4"/></g><path d="M12 9 V12 H9 Z" fill="#555"/></svg>
<svg style="left:18px;top:323.5px" width="12" height="12" viewBox="0 0 12 12"><rect x="3.5" y="1" width="5" height="10.5" fill="#d86a5a" stroke="#6a1a10" stroke-width="0.6"/><rect x="4.8" y="2.5" width="2.4" height="2" fill="#fff"/><rect x="4.8" y="6" width="2.4" height="2" fill="#fff"/><path d="M2.5 1.2 H9.5" stroke="#6a1a10" stroke-width="0.9"/><path d="M12 9 V12 H9 Z" fill="#555"/></svg>
<svg style="left:3px;top:338.5px" width="12" height="12" viewBox="0 0 12 12"><path d="M2 3 L5 2 L6 10 L3 11 Z" fill="#fff" stroke="#333" stroke-width="0.6"/><path d="M5.5 3.5 L9.5 2 L9 9.5 L6 11 Z" fill="#4c66d0" stroke="#24388e" stroke-width="0.5"/><path d="M6.5 1 L8 2.5" stroke="#333" stroke-width="0.6"/><path d="M12 9 V12 H9 Z" fill="#555"/></svg>
<svg style="left:18px;top:338.5px" width="12" height="12" viewBox="0 0 12 12"><path d="M1.5 6.5 L4.5 10 L10.8 2" fill="none" stroke="#111" stroke-width="1.5"/><path d="M12 9 V12 H9 Z" fill="#555"/></svg>
<svg style="left:3px;top:353.5px" width="12" height="12" viewBox="0 0 12 12"><path d="M1 10.5 L4 4 L7 10.5 Z" fill="#cfcfcf" stroke="#444" stroke-width="0.6"/><circle cx="7.5" cy="7.5" r="3" fill="#bcbcbc" stroke="#444" stroke-width="0.6"/><path d="M12 9 V12 H9 Z" fill="#555"/></svg>
<svg style="left:18px;top:353.5px" width="12" height="12" viewBox="0 0 12 12"><path d="M1.2 9 L6 4.5 L10.8 9 L6 11.5 Z" fill="#f0b428" stroke="#7a5408" stroke-width="0.5"/><path d="M6 4.5 L8.5 1.5 L10.5 2.5 L8 5" fill="#ddd" stroke="#555" stroke-width="0.5"/><path d="M12 9 V12 H9 Z" fill="#555"/></svg>
<svg style="left:35.3px;top:93px;overflow:hidden" width="874.4" height="421.5" viewBox="35.3 93 874.4 421.5">
<defs><linearGradient id="bg" x1="0" y1="0" x2="0" y2="1"><stop offset="0" stop-color="#c5c5c5"/><stop offset="1" stop-color="#281ae9"/></linearGradient>
<linearGradient id="face" x1="0" y1="0" x2="1" y2="0"><stop offset="0" stop-color="#cdcdcd"/><stop offset="0.2" stop-color="#d6d6d6"/><stop offset="0.6" stop-color="#dedede"/><stop offset="1" stop-color="#d6d6d6"/></linearGradient>
<linearGradient id="facev" x1="0" y1="0" x2="0" y2="1"><stop offset="0" stop-color="#fff" stop-opacity="0.2"/><stop offset="0.5" stop-color="#fff" stop-opacity="0"/><stop offset="1" stop-color="#000" stop-opacity="0.1"/></linearGradient>
</defs>
<rect x="35" y="93" width="876" height="422" fill="url(#bg)"/>
<path d="M35 501.7 L267 350.6 L810 394.6 L854 515 H35 Z" fill="#84888d"/>
<path d="M519.5 372 L480 438" stroke="#4d9a4f" stroke-width="0.8" fill="none"/>
<path d="M487 498.7 L607 514.5" stroke="#9c4a4a" stroke-width="0.8" fill="none"/>
<defs><linearGradient id="rim" x1="0" y1="0" x2="1" y2="0"><stop offset="0" stop-color="#cccccc"/><stop offset="0.35" stop-color="#bcbcbc"/><stop offset="0.58" stop-color="#7a7a7a"/><stop offset="0.8" stop-color="#1c1c1c"/><stop offset="1" stop-color="#060606"/></linearGradient>
<linearGradient id="blk" x1="0" y1="0" x2="1" y2="0"><stop offset="0" stop-color="#060606"/><stop offset="0.75" stop-color="#0a0a0c"/><stop offset="1" stop-color="#3a3a42"/></linearGradient></defs>
<path d="M409.3 487.3 L417.8 481 L480 474.6 Q486.5 481 487.5 489.5 L487.5 497.6 Q486 498.8 480 498.6 Q448 498 432 494.5 Q415 491.5 409.3 487.3 Z" fill="#9b9c9c"/>
<path d="M417.8 481 L409.3 487.3 M480 474.6 Q486.5 481 487.5 489.5 L487.5 497.6" fill="none" stroke="#2a2a2a" stroke-width="0.6"/>
<path d="M410.7 489.6 Q430 494.5 448.8 496.6 Q468 498 486 497.6" fill="none" stroke="#333" stroke-width="0.7"/>
<path d="M410.7 490.8 Q430 495.7 448.8 497.7" fill="none" stroke="#d4d4d4" stroke-width="0.6" stroke-dasharray="3 1.3"/>
<path d="M453 498 Q470 499 486 498.7" fill="none" stroke="#d8d8d8" stroke-width="0.6"/>
<path d="M476 143.4 L483.8 142.8 Q487.2 143.5 487.2 147 L487 230 L486.7 300 L485.2 341 L483.4 369 L480.4 400 L479.5 440 L479.2 470 L479.2 495.2 L476 495 L474.5 400 Z" fill="url(#blk)"/>
<path d="M414.4 145.5 Q414.4 142.3 417 141.9 Q446 138.2 476 142.2 L478.5 144 L477 230 L475.5 300 L475.3 400 L477 450 L477.2 495 L474.8 494.9 Q446 494 419.3 488.4 Q414.6 400 414.1 340 Z" fill="#e0e0e0"/>
<path d="M473.3 146 L480.5 143.6 L479.6 230 L476 300 L475.8 350 L476 400 L477.3 450 L477.4 495 L474.8 494.9 L472.5 450 L471.2 400 L470.6 350 L470.2 300 L471.8 230 Z" fill="url(#rim)"/>
<path d="M415.5 144.6 Q415.6 143.2 417.5 143 Q446 139.6 475 143.2 L476 144.4 Q446 141 417 144.2 Z" fill="#e4e4e4"/>
<defs><linearGradient id="hl" x1="0" y1="0" x2="1" y2="0"><stop offset="0" stop-color="#000" stop-opacity="0.04"/><stop offset="0.3" stop-color="#fff" stop-opacity="0.05"/><stop offset="1" stop-color="#fff" stop-opacity="0.4"/></linearGradient>
<linearGradient id="hd" x1="0" y1="0" x2="1" y2="0"><stop offset="0" stop-color="#fff" stop-opacity="0.04"/><stop offset="0.35" stop-color="#000" stop-opacity="0"/><stop offset="1" stop-color="#000" stop-opacity="0.11"/></linearGradient>
<linearGradient id="mt" x1="0" y1="0" x2="0" y2="1"><stop offset="0" stop-color="#fff"/><stop offset="0.5" stop-color="#000"/></linearGradient>
<linearGradient id="mb" x1="0" y1="0" x2="0" y2="1"><stop offset="0.45" stop-color="#000"/><stop offset="1" stop-color="#fff"/></linearGradient>
<mask id="mkt" maskUnits="userSpaceOnUse" x="410" y="138" width="75" height="362"><rect x="410" y="138" width="75" height="362" fill="url(#mt)"/></mask>
<mask id="mkb" maskUnits="userSpaceOnUse" x="410" y="138" width="75" height="362"><rect x="410" y="138" width="75" height="362" fill="url(#mb)"/></mask></defs>
<path d="M416.3 147.5 Q416.3 145 418.5 144.8 Q446 141.7 471.5 145 Q473.3 145.4 473.3 148 L471.8 230 L470.2 300 L470.6 350 L471.2 400 L472.5 450 L474.8 494.8 Q446 493.8 419.6 488.2 Q416.5 400 416 340 Z" fill="#d6d6d6"/>
<g mask="url(#mkt)"><path d="M416.3 147.5 Q416.3 145 418.5 144.8 Q446 141.7 471.5 145 Q473.3 145.4 473.3 148 L471.8 230 L470.2 300 L470.6 350 L471.2 400 L472.5 450 L474.8 494.8 Q446 493.8 419.6 488.2 Q416.5 400 416 340 Z" fill="url(#hl)"/></g>
<g mask="url(#mkb)"><path d="M416.3 147.5 Q416.3 145 418.5 144.8 Q446 141.7 471.5 145 Q473.3 145.4 473.3 148 L471.8 230 L470.2 300 L470.6 350 L471.2 400 L472.5 450 L474.8 494.8 Q446 493.8 419.6 488.2 Q416.5 400 416 340 Z" fill="url(#hd)"/></g>
<path d="M414.4 147 Q414.3 142.2 417 141.9 Q446 138.2 476 142.2 L483.8 142.8" fill="none" stroke="#333" stroke-width="0.7"/>
<path d="M414.3 146 L414.1 340 Q414.6 400 419 488" fill="none" stroke="#555" stroke-width="0.6"/>
<path d="M414.2 180 L414 330" fill="none" stroke="#3a3a3a" stroke-width="0.45" stroke-dasharray="14 9"/>
<path d="M473.3 151 L471.8 230 L470.2 300 L470.6 350 L471.2 400 L472.5 450 L474.6 492" fill="none" stroke="#333" stroke-width="0.55" stroke-dasharray="15 1.2"/>
<path d="M416.4 158 L416 340 Q416.5 400 420 486" fill="none" stroke="#4a4a4a" stroke-width="0.45"/>
<path d="M419.6 488.2 Q446 493.8 474.8 494.8" fill="none" stroke="#555" stroke-width="0.5"/>
<ellipse cx="443.6" cy="201.5" rx="25.4" ry="26.1" fill="#dedede" stroke="#1c1c1c" stroke-width="0.9"/>
<path d="M420.58 190.47 A25.4 26.1 0 0 1 467.47 210.43" fill="none" stroke="#111" stroke-width="1.4"/>
<ellipse cx="442.8" cy="258.4" rx="25" ry="25.2" fill="#dedede" stroke="#1c1c1c" stroke-width="0.9"/>
<path d="M420.14 247.75 A25 25.2 0 0 1 466.29 267.02" fill="none" stroke="#111" stroke-width="1.4"/>
<ellipse cx="442.1" cy="314.3" rx="24.7" ry="24.7" fill="#dedede" stroke="#1c1c1c" stroke-width="0.9"/>
<path d="M419.71 303.86 A24.7 24.7 0 0 1 465.31 322.75" fill="none" stroke="#111" stroke-width="1.4"/>
<g stroke="#6a6e74" stroke-width="0.55" fill="none"><path d="M55.1 494.9 L55.4 487.5 M55.1 494.9 L71.2 496.3 M55.1 494.9 L60.8 491.2"/><path d="M55.4 487.5 L55.7 479.5" stroke="#5a55e6"/></g>
<text x="57" y="479.6" font-size="5" fill="#6f6ce8" font-family="Liberation Sans, sans-serif">z</text><text x="60.8" y="491.8" font-size="5.4" fill="#5c6066" font-family="Liberation Sans, sans-serif">y</text><text x="72.4" y="497.3" font-size="5.2" fill="#5c6066" font-family="Liberation Sans, sans-serif">x</text>
</svg>
<div class="a" style="left:35.3px;top:93px;width:46.7px;height:10px;background:#97aed3"></div>
<div class="t" id="t38" style="left:40px;top:93px;font-size:6.7px;color:#1c2c4c;transform:scaleX(0.9227);">Perspective</div>
<div class="a" style="left:76px;top:94px;width:0.7px;height:8px;background:#1c2c4c"></div>
<svg style="left:77px;top:96px" width="5" height="4" viewBox="0 0 5 4"><path d="M0.6 0.8 H4.4 L2.5 3.4 Z" fill="#1c2c4c"/></svg>
<div class="a" style="left:910px;top:93px;width:114px;height:449px;background:#e7eaf2"></div>
<div class="a" style="left:914px;top:97px;width:110px;height:427.5px;background:#f3f4f8;border-left:0.6px solid #d3d6df;border-top:0.6px solid #d9dce4"></div>
<div class="a" style="left:914.5px;top:112px;width:109.5px;height:12.5px;background:#f8f8fa"></div>
<div class="a" style="left:914.8px;top:124.7px;width:109.2px;height:315.5px;background:#fff;border-top:0.6px solid #d5d8e0"></div>
<div class="a" style="left:914.8px;top:440.5px;width:109.2px;height:84px;background:#f6f6f7;border-top:0.6px solid #d5d8e0;border-bottom:0.8px solid #cfd2da"></div>
<div class="a" style="left:914.8px;top:98.5px;width:13.5px;height:13.5px;background:#fcfcfd"></div>
<div class="a" style="left:928.5px;top:98.5px;width:69.5px;height:12.5px;background:#e2e6f0;border:0.5px solid #cdd1dc;box-sizing:border-box"></div>
<svg style="left:915.2px;top:98.8px" width="12.5" height="12" viewBox="0 0 12.5 12"><rect x="0.5" y="1.5" width="5" height="7" fill="#fff" stroke="#555" stroke-width="0.6"/><path d="M5 3.5 L8 2.5 L12 4 L11 8.5 L8 11 L5.5 9 Z" fill="#e34a24" stroke="#7c1d0c" stroke-width="0.4"/><path d="M5.8 8.2 L8 10 L10.8 7.6" fill="none" stroke="#24367c" stroke-width="0.9"/></svg>
<svg style="left:929.3px;top:98.8px" width="12.5" height="12" viewBox="0 0 12.5 12"><path d="M0.8 3 L4 1 L7 3 L12 1.5 L10.5 7.5 L6.5 11 L2 8 Z" fill="#e34a24" stroke="#7c1d0c" stroke-width="0.5"/><path d="M1.5 6.3 L6.3 9 L11 5.8" fill="none" stroke="#fff" stroke-width="1"/><path d="M2 8 L6.5 11 L10.6 7.6" fill="none" stroke="#24367c" stroke-width="1.1"/></svg>
<svg style="left:943.4px;top:98.8px" width="12.5" height="12" viewBox="0 0 12.5 12"><rect x="0.8" y="1" width="11" height="8" fill="#c9c9c9" stroke="#111" stroke-width="1"/><rect x="4" y="9.5" width="5" height="1.6" fill="#111"/></svg>
<svg style="left:957px;top:98.8px" width="12.5" height="12" viewBox="0 0 12.5 12"><rect x="0.8" y="1" width="11" height="10" fill="#3d55c8" stroke="#222" stroke-width="0.8"/><rect x="1.2" y="1.4" width="10.2" height="1.6" fill="#d8d8e8"/><circle cx="6.2" cy="7" r="2.8" fill="#8ea4ec"/><text x="6.2" y="9" font-size="5.5" font-weight="bold" fill="#fff" text-anchor="middle" font-family="Liberation Sans, sans-serif">?</text></svg>
<svg style="left:970.8px;top:98.8px" width="12.5" height="12" viewBox="0 0 12.5 12"><path d="M4.00 2.54 A4 4 0 0 1 8.12 2.61" fill="none" stroke="#e8242c" stroke-width="2.6"/><path d="M8.00 2.54 A4 4 0 0 1 10.00 6.14" fill="none" stroke="#f08a1c" stroke-width="2.6"/><path d="M10.00 6.00 A4 4 0 0 1 7.88 9.53" fill="none" stroke="#f2de22" stroke-width="2.6"/><path d="M8.00 9.46 A4 4 0 0 1 3.88 9.39" fill="none" stroke="#3cb64a" stroke-width="2.6"/><path d="M4.00 9.46 A4 4 0 0 1 2.00 5.86" fill="none" stroke="#2a8fe0" stroke-width="2.6"/><path d="M2.00 6.00 A4 4 0 0 1 4.12 2.47" fill="none" stroke="#7a3cc8" stroke-width="2.6"/><circle cx="6" cy="6" r="5.3" fill="none" stroke="#333" stroke-width="0.5"/><circle cx="6" cy="6" r="2.7" fill="#fff" stroke="#555" stroke-width="0.3"/></svg>
<svg style="left:985px;top:98.8px" width="12.5" height="12" viewBox="0 0 12.5 12"><g stroke="#0d5d68" stroke-width="0.5"><path d="M1 8.5 L6.5 6.5 L12 8.5 L6.5 11 Z" fill="#2aa2b4"/><path d="M1 6 L6.5 4 L12 6 L6.5 8.5 Z" fill="#38b6c8"/><path d="M1 3.5 L6.5 1.5 L12 3.5 L6.5 6 Z" fill="#5fd0df"/></g></svg>
<svg style="left:1015.5px;top:104px" width="8" height="8" viewBox="0 0 8 8"><circle cx="4" cy="4" r="3.2" fill="#eff0f4" stroke="#9a9a9a" stroke-width="0.6"/><circle cx="4" cy="4" r="1.1" fill="none" stroke="#aaa" stroke-width="0.5"/></svg>
<svg style="left:916px;top:115px" width="7.6" height="7.6" viewBox="0 0 7.6 7.6"><rect x="0.6" y="0.6" width="6.3" height="6.3" fill="#666" stroke="#444" stroke-width="0.5"/><rect x="2" y="1" width="3.5" height="2.2" fill="#ddd"/></svg>
<svg style="left:927px;top:115px" width="7.6" height="7.6" viewBox="0 0 7.6 7.6"><path d="M1 6.5 V4 L4.5 0.8 L6.5 2.5 L3.5 6.5 Z" fill="#c4c4c4"/></svg>
<svg style="left:938px;top:115px" width="7.6" height="7.6" viewBox="0 0 7.6 7.6"><path d="M0.8 0.8 L6.8 6.8 M6.8 0.8 L0.8 6.8" stroke="#7a7a7a" stroke-width="0.9"/></svg>
<svg style="left:949px;top:115px" width="7.6" height="7.6" viewBox="0 0 7.6 7.6"><path d="M0.6 1.5 H3 L3.8 2.3 H7 V6.3 H0.6 Z" fill="#aaa" stroke="#666" stroke-width="0.5"/></svg>
<svg style="left:960px;top:115px" width="7.6" height="7.6" viewBox="0 0 7.6 7.6"><path d="M1 0.6 H4.8 L6.5 2.2 V7 H1 Z" fill="#ccc" stroke="#999" stroke-width="0.5"/></svg>
<svg style="left:971.5px;top:115px" width="7.6" height="7.6" viewBox="0 0 7.6 7.6"><circle cx="3.8" cy="3.8" r="3.5" fill="#555"/><text x="3.8" y="6" font-size="5.5" font-weight="bold" fill="#fff" text-anchor="middle" font-family="Liberation Sans, sans-serif">?</text></svg>
<div class="t b" id="t39" style="left:918.5px;top:277.7px;font-size:6.7px;color:#555;transform:scaleX(0.9819);">No layer states have been saved</div>
<div class="cbg" style="left:917px;top:444.5px"></div>
<svg style="left:917px;top:444.5px" width="6" height="6" viewBox="0 0 6 6"><path d="M1.3 3 L2.6 4.4 L5 1.4" fill="none" stroke="#cacaca" stroke-width="0.7"/></svg>
<div class="t" id="t40" style="left:926px;top:443.5px;font-size:6.4px;color:#8c8c8c;transform:scaleX(0.8605);">Layer settings to restore</div>
<div class="a" style="left:988px;top:448.3px;width:33px;height:0.6px;background:#dcdcdc"></div>
<div class="cbg" style="left:919.6px;top:453.8px"></div>
<svg style="left:919.6px;top:453.8px" width="6" height="6" viewBox="0 0 6 6"><path d="M1.3 3 L2.6 4.4 L5 1.4" fill="none" stroke="#cacaca" stroke-width="0.7"/></svg>
<div class="t" id="t41" style="left:928px;top:452.8px;font-size:6.4px;color:#8c8c8c;transform:scaleX(0.8117);">Current</div>
<div class="cbg" style="left:919.6px;top:462.3px"></div>
<svg style="left:919.6px;top:462.3px" width="6" height="6" viewBox="0 0 6 6"><path d="M1.3 3 L2.6 4.4 L5 1.4" fill="none" stroke="#cacaca" stroke-width="0.7"/></svg>
<div class="t" id="t42" style="left:928px;top:461.3px;font-size:6.4px;color:#8c8c8c;transform:scaleX(0.9072);">On / Off</div>
<div class="cbg" style="left:919.6px;top:470.9px"></div>
<svg style="left:919.6px;top:470.9px" width="6" height="6" viewBox="0 0 6 6"><path d="M1.3 3 L2.6 4.4 L5 1.4" fill="none" stroke="#cacaca" stroke-width="0.7"/></svg>
<div class="t" id="t43" style="left:928px;top:469.9px;font-size:6.4px;color:#8c8c8c;transform:scaleX(0.9319);">Locked / Unlocked</div>
<div class="cbg" style="left:919.6px;top:479.5px"></div>
<svg style="left:919.6px;top:479.5px" width="6" height="6" viewBox="0 0 6 6"><path d="M1.3 3 L2.6 4.4 L5 1.4" fill="none" stroke="#cacaca" stroke-width="0.7"/></svg>
<div class="t" id="t44" style="left:928px;top:478.5px;font-size:6.4px;color:#8c8c8c;transform:scaleX(0.8180);">Color</div>
<div class="cbg" style="left:987px;top:453.8px"></div>
<svg style="left:987px;top:453.8px" width="6" height="6" viewBox="0 0 6 6"><path d="M1.3 3 L2.6 4.4 L5 1.4" fill="none" stroke="#cacaca" stroke-width="0.7"/></svg>
<div class="t" id="t45" style="left:995px;top:452.8px;font-size:6.4px;color:#8c8c8c;transform:scaleX(0.8605);">Linetype</div>
<div class="cbg" style="left:987px;top:462.3px"></div>
<svg style="left:987px;top:462.3px" width="6" height="6" viewBox="0 0 6 6"><path d="M1.3 3 L2.6 4.4 L5 1.4" fill="none" stroke="#cacaca" stroke-width="0.7"/></svg>
<div class="t" id="t46" style="left:995px;top:461.3px;font-size:6.4px;color:#8c8c8c;transform:scaleX(0.8825);">Print color</div>
<div class="cbg" style="left:987px;top:470.9px"></div>
<svg style="left:987px;top:470.9px" width="6" height="6" viewBox="0 0 6 6"><path d="M1.3 3 L2.6 4.4 L5 1.4" fill="none" stroke="#cacaca" stroke-width="0.7"/></svg>
<div class="t" id="t47" style="left:995px;top:469.9px;font-size:6.4px;color:#8c8c8c;transform:scaleX(0.8712);">Print width</div>
<div class="cbg" style="left:917px;top:490px"></div>
<svg style="left:917px;top:490px" width="6" height="6" viewBox="0 0 6 6"><path d="M1.3 3 L2.6 4.4 L5 1.4" fill="none" stroke="#cacaca" stroke-width="0.7"/></svg>
<div class="a" style="left:926px;top:489px;width:96.8px;height:10px;overflow:hidden">
<div class="t" id="t48" style="left:0px;top:0px;font-size:6.4px;color:#8c8c8c;transform:scaleX(0.8891);">Layout or Detail Layer setting to restore</div>
</div>
<div class="cbg" style="left:919.6px;top:499.7px"></div>
<svg style="left:919.6px;top:499.7px" width="6" height="6" viewBox="0 0 6 6"><path d="M1.3 3 L2.6 4.4 L5 1.4" fill="none" stroke="#cacaca" stroke-width="0.7"/></svg>
<div class="t" id="t49" style="left:928px;top:498.7px;font-size:6.4px;color:#8c8c8c;transform:scaleX(0.9072);">On / Off</div>
<div class="cbg" style="left:919.6px;top:508.20000000000005px"></div>
<svg style="left:919.6px;top:508.20000000000005px" width="6" height="6" viewBox="0 0 6 6"><path d="M1.3 3 L2.6 4.4 L5 1.4" fill="none" stroke="#cacaca" stroke-width="0.7"/></svg>
<div class="t" id="t50" style="left:928px;top:507.2px;font-size:6.4px;color:#8c8c8c;transform:scaleX(0.8180);">Color</div>
<div class="cbg" style="left:987px;top:499.7px"></div>
<svg style="left:987px;top:499.7px" width="6" height="6" viewBox="0 0 6 6"><path d="M1.3 3 L2.6 4.4 L5 1.4" fill="none" stroke="#cacaca" stroke-width="0.7"/></svg>
<div class="t" id="t51" style="left:995px;top:498.7px;font-size:6.4px;color:#8c8c8c;transform:scaleX(0.8825);">Print color</div>
<div class="cbg" style="left:987px;top:508.20000000000005px"></div>
<svg style="left:987px;top:508.20000000000005px" width="6" height="6" viewBox="0 0 6 6"><path d="M1.3 3 L2.6 4.4 L5 1.4" fill="none" stroke="#cacaca" stroke-width="0.7"/></svg>
<div class="t" id="t52" style="left:995px;top:507.2px;font-size:6.4px;color:#8c8c8c;transform:scaleX(0.8712);">Print width</div>
<div class="a" style="left:36px;top:514.5px;width:874px;height:11.5px;background:#e7eaf2"></div>
<svg style="left:36px;top:514.5px" width="130" height="12" viewBox="0 0 130 12"><path d="M0 0 H40 V10 Q40 11 39 11 H4 Q2 11 1.5 7 Z" fill="#fdfdfe"/>
<path d="M42.5 0.5 V9 Q42.5 10.8 44.5 10.8 H58.7 Q60.7 10.8 60.7 9 V0.5 Z" fill="#e1e4ee" stroke="#cfd3dd" stroke-width="0.4"/>
<path d="M62 0.5 V9 Q62 10.8 64 10.8 H83.6 Q85.6 10.8 85.6 9 V0.5 Z" fill="#e1e4ee" stroke="#cfd3dd" stroke-width="0.4"/>
<path d="M86.6 0.5 V9 Q86.6 10.8 88.6 10.8 H108.6 Q110.6 10.8 110.6 9 V0.5 Z" fill="#e1e4ee" stroke="#cfd3dd" stroke-width="0.4"/>
<path d="M112.4 0.5 V9 Q112.4 10.8 114.4 10.8 H125.6 Q127.6 10.8 127.6 9 V0.5 Z" fill="#e1e4ee" stroke="#cfd3dd" stroke-width="0.4"/>
<path d="M120 4 V8.2" stroke="#777" stroke-width="1" fill="none"/><path d="M117.4 5.8 L120 3 L122.6 5.8 Z" fill="#777"/>
</svg>
<div class="t" id="t53" style="left:40.6px;top:515.6px;font-size:6.7px;color:#333;transform:scaleX(0.9241);">Perspective</div>
<div class="t" id="t54" style="left:82.5px;top:515.6px;font-size:6.7px;color:#333;transform:scaleX(0.9739);">Top</div>
<div class="t" id="t55" style="left:102.75px;top:515.6px;font-size:6.7px;color:#333;transform:scaleX(0.9449);">Front</div>
<div class="t" id="t56" style="left:127.5px;top:515.6px;font-size:6.7px;color:#333;transform:scaleX(0.9280);">Right</div>
<svg style="left:7.5px;top:531.1px" width="7" height="7" viewBox="0 0 7 7"><rect x="0.35" y="0.35" width="6" height="6" fill="#fff" stroke="#4a4a4a" stroke-width="0.7"/><path d="M1.6 3.4 L3 5 L5.6 1.8" fill="none" stroke="#333" stroke-width="0.7"/></svg>
<div class="t" id="t57" style="left:16.5px;top:530.2px;font-size:6.8px;color:#2c2c2c;transform:scaleX(0.9509);">End</div>
<svg style="left:32.5px;top:531.1px" width="7" height="7" viewBox="0 0 7 7"><rect x="0.35" y="0.35" width="6" height="6" fill="#fff" stroke="#4a4a4a" stroke-width="0.7"/></svg>
<div class="t" id="t58" style="left:41.75px;top:530.2px;font-size:6.8px;color:#2c2c2c;transform:scaleX(0.9332);">Near</div>
<svg style="left:60.75px;top:531.1px" width="7" height="7" viewBox="0 0 7 7"><rect x="0.35" y="0.35" width="6" height="6" fill="#fff" stroke="#4a4a4a" stroke-width="0.7"/></svg>
<div class="t" id="t59" style="left:69.5px;top:530.2px;font-size:6.8px;color:#2c2c2c;transform:scaleX(0.9194);">Point</div>
<svg style="left:88.75px;top:531.1px" width="7" height="7" viewBox="0 0 7 7"><rect x="0.35" y="0.35" width="6" height="6" fill="#fff" stroke="#4a4a4a" stroke-width="0.7"/><path d="M1.6 3.4 L3 5 L5.6 1.8" fill="none" stroke="#333" stroke-width="0.7"/></svg>
<div class="t" id="t60" style="left:97.75px;top:530.2px;font-size:6.8px;color:#2c2c2c;transform:scaleX(1.0499);">Mid</div>
<svg style="left:113.25px;top:531.1px" width="7" height="7" viewBox="0 0 7 7"><rect x="0.35" y="0.35" width="6" height="6" fill="#fff" stroke="#4a4a4a" stroke-width="0.7"/><path d="M1.6 3.4 L3 5 L5.6 1.8" fill="none" stroke="#333" stroke-width="0.7"/></svg>
<div class="t" id="t61" style="left:122.5px;top:530.2px;font-size:6.8px;color:#2c2c2c;transform:scaleX(0.9424);">Cen</div>
<svg style="left:138.75px;top:531.1px" width="7" height="7" viewBox="0 0 7 7"><rect x="0.35" y="0.35" width="6" height="6" fill="#fff" stroke="#4a4a4a" stroke-width="0.7"/><path d="M1.6 3.4 L3 5 L5.6 1.8" fill="none" stroke="#333" stroke-width="0.7"/></svg>
<div class="t" id="t62" style="left:148px;top:530.2px;font-size:6.8px;color:#2c2c2c;transform:scaleX(0.9256);">Int</div>
<svg style="left:159.5px;top:531.1px" width="7" height="7" viewBox="0 0 7 7"><rect x="0.35" y="0.35" width="6" height="6" fill="#fff" stroke="#4a4a4a" stroke-width="0.7"/></svg>
<div class="t" id="t63" style="left:168.75px;top:530.2px;font-size:6.8px;color:#2c2c2c;transform:scaleX(0.9053);">Perp</div>
<svg style="left:187px;top:531.1px" width="7" height="7" viewBox="0 0 7 7"><rect x="0.35" y="0.35" width="6" height="6" fill="#fff" stroke="#4a4a4a" stroke-width="0.7"/></svg>
<div class="t" id="t64" style="left:196.25px;top:530.2px;font-size:6.8px;color:#2c2c2c;transform:scaleX(0.9573);">Tan</div>
<svg style="left:211.5px;top:531.1px" width="7" height="7" viewBox="0 0 7 7"><rect x="0.35" y="0.35" width="6" height="6" fill="#fff" stroke="#4a4a4a" stroke-width="0.7"/></svg>
<div class="t" id="t65" style="left:220.75px;top:530.2px;font-size:6.8px;color:#2c2c2c;transform:scaleX(0.9315);">Quad</div>
<svg style="left:240.5px;top:531.1px" width="7" height="7" viewBox="0 0 7 7"><rect x="0.35" y="0.35" width="6" height="6" fill="#fff" stroke="#4a4a4a" stroke-width="0.7"/></svg>
<div class="t" id="t66" style="left:250px;top:530.2px;font-size:6.8px;color:#2c2c2c;transform:scaleX(0.8223);">Knot</div>
<svg style="left:267.25px;top:531.1px" width="7" height="7" viewBox="0 0 7 7"><rect x="0.35" y="0.35" width="6" height="6" fill="#fff" stroke="#4a4a4a" stroke-width="0.7"/></svg>
<div class="t" id="t67" style="left:277.25px;top:530.2px;font-size:6.8px;color:#2c2c2c;transform:scaleX(0.9724);">Vertex</div>
<div class="cbd" style="left:299.75px;top:531.1px"></div>
<div class="t" id="t68" style="left:309.75px;top:530.2px;font-size:6.8px;color:#2c2c2c;transform:scaleX(0.9808);">Project</div>
<div class="cbd" style="left:333px;top:531.1px"></div>
<div class="t" id="t69" style="left:343.5px;top:530.2px;font-size:6.8px;color:#2c2c2c;transform:scaleX(0.9924);">Disable</div>
<div class="a" style="left:0;top:541.5px;width:1024px;height:10.5px;background:#e4e7ef;border-top:0.6px solid #cfd2dc"></div>
<div class="a" style="left:406.5px;top:542px;width:28.5px;height:10px;background:#f4f8fd"></div>
<div class="a" style="left:480px;top:542px;width:36px;height:10px;background:#f4f8fd"></div>
<div class="sep" style="left:31px"></div>
<div class="sep" style="left:78px"></div>
<div class="sep" style="left:125px"></div>
<div class="sep" style="left:172.5px"></div>
<div class="sep" style="left:217.5px"></div>
<div class="sep" style="left:311.5px"></div>
<div class="sep" style="left:352px"></div>
<div class="sep" style="left:377.75px"></div>
<div class="sep" style="left:406px"></div>
<div class="sep" style="left:435px"></div>
<div class="sep" style="left:479.75px"></div>
<div class="sep" style="left:516px"></div>
<div class="sep" style="left:573px"></div>
<div class="sep" style="left:597px"></div>
<div class="sep" style="left:1010px"></div>
<div class="t" id="t70" style="left:5.5px;top:542.5px;font-size:6.7px;color:#333;transform:scaleX(0.9231);">CPlane</div>
<div class="t" id="t71" style="left:40px;top:542.5px;font-size:6.7px;color:#333;transform:scaleX(1.0037);">x 3679.30</div>
<div class="t" id="t72" style="left:87px;top:542.5px;font-size:6.7px;color:#333;transform:scaleX(1.0124);">y 6115.96</div>
<div class="t" id="t73" style="left:140px;top:542.5px;font-size:6.7px;color:#333;transform:scaleX(0.9880);">z 0.00</div>
<div class="t" id="t74" style="left:180px;top:542.5px;font-size:6.7px;color:#333;transform:scaleX(1.0015);">Millimeters</div>
<div class="t" id="t75" style="left:318px;top:542.5px;font-size:6.7px;color:#333;transform:scaleX(0.9295);">Grid Snap</div>
<div class="t" id="t76" style="left:356.75px;top:542.5px;font-size:6.7px;color:#333;transform:scaleX(1.0009);">Ortho</div>
<div class="t" id="t77" style="left:383.5px;top:542.5px;font-size:6.7px;color:#333;transform:scaleX(0.9047);">Planar</div>
<div class="t b" id="t78" style="left:411px;top:542.5px;font-size:6.7px;color:#333;transform:scaleX(0.9249);">Osnap</div>
<div class="t" id="t79" style="left:442px;top:542.5px;font-size:6.7px;color:#333;transform:scaleX(0.9326);">SmartTrack</div>
<div class="t b" id="t80" style="left:486px;top:542.5px;font-size:6.7px;color:#333;transform:scaleX(0.9340);">Gumball</div>
<div class="t" id="t81" style="left:524.5px;top:542.5px;font-size:6.7px;color:#333;transform:scaleX(0.9495);">Record History</div>
<div class="t" id="t82" style="left:579.5px;top:542.5px;font-size:6.7px;color:#333;transform:scaleX(0.9244);">Filter</div>
<div class="t" id="t83" style="left:600px;top:542.5px;font-size:6.7px;color:#333;transform:scaleX(0.9353);">CPU use: 1.9 %</div>
<div class="a" style="left:222px;top:544px;width:6px;height:6.5px;background:#000"></div>
<div class="t" id="t84" style="left:230px;top:542.3px;font-size:6.4px;color:#333;transform:scaleX(0.9705);">기본값</div>
<div class="a" style="left:0;top:552px;width:1024px;height:1px;background:#55524f"></div>
<div class="a" style="left:0;top:0;width:1.3px;height:553px;background:#35312e"></div>
</div></body></html>
